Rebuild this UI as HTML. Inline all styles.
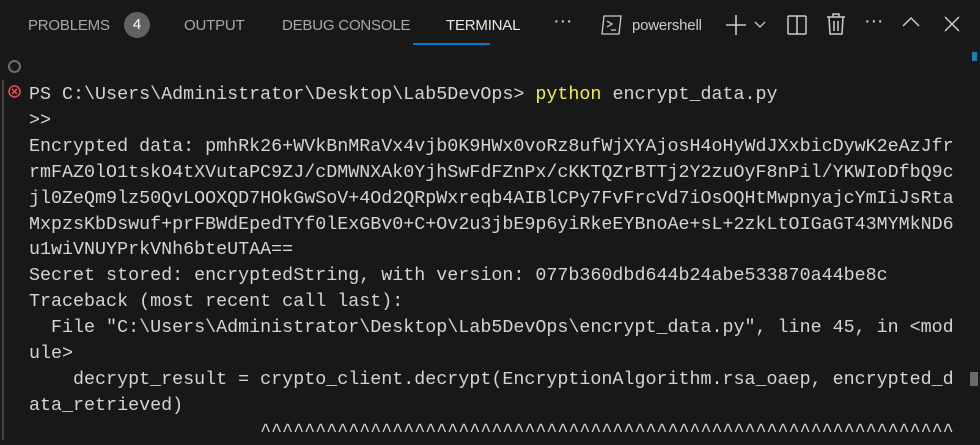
<!DOCTYPE html>
<html><head><style>
body{margin:0;width:980px;height:440px;background:#181818;overflow:hidden;position:relative;font-family:"Liberation Sans",sans-serif}
.tab{position:absolute;top:17px;font-size:15px;color:#a8a8a8;letter-spacing:-0.2px}
.term{position:absolute;left:29px;top:82px;font-family:"Liberation Mono",monospace;font-size:18.35px;line-height:25.9px;color:#d4d4d4;white-space:pre;letter-spacing:0}
.y{color:#f1f14c}
svg{position:absolute}
</style></head><body>
<div class="tab" style="left:28px">PROBLEMS</div>
<div style="position:absolute;left:124px;top:12px;width:26px;height:26px;border-radius:13px;background:#616161;color:#fff;font-size:15px;text-align:center;line-height:26px">4</div>
<div class="tab" style="left:184px">OUTPUT</div>
<div class="tab" style="left:282px">DEBUG CONSOLE</div>
<div class="tab" style="left:446px;color:#e7e7e7">TERMINAL</div>
<div style="position:absolute;left:413px;top:43px;width:77px;height:2px;background:#0078d4"></div>
<div class="tab" style="left:553px;top:10px;font-size:20px;color:#ccc">···</div>
<svg style="left:600px;top:13px" width="24" height="24" viewBox="0 0 24 24" fill="none" stroke="#ccc" stroke-width="1.3"><path d="M4 3h17l-2 18H2z"/><path d="M7 8l5 3-5 3M11 17h5"/></svg>
<div class="tab" style="left:632px;color:#ccc">powershell</div>
<svg style="left:724px;top:13px" width="24" height="24" stroke="#ccc" stroke-width="1.6"><path d="M12 2v20M2 12h20"/></svg>
<svg style="left:754px;top:18px" width="12" height="12" stroke="#ccc" stroke-width="1.3" fill="none"><path d="M1 4l5 5 5-5"/></svg>
<svg style="left:786px;top:14px" width="22" height="22" stroke="#ccc" stroke-width="1.5" fill="none"><rect x="2" y="2" width="18" height="18" rx="1"/><path d="M11 2v18"/></svg>
<svg style="left:826px;top:13px" width="20" height="22" stroke="#ccc" stroke-width="1.5" fill="none"><path d="M1 4h18M7 4V1h6v3M3 4l1 17h12l1-17M8 8v10M12 8v10"/></svg>
<div class="tab" style="left:864px;top:10px;font-size:20px;color:#ccc">···</div>
<svg style="left:902px;top:16px" width="18" height="12" stroke="#ccc" stroke-width="1.5" fill="none"><path d="M1 10l8-8 8 8"/></svg>
<svg style="left:944px;top:16px" width="16" height="16" stroke="#ccc" stroke-width="1.5"><path d="M1 1l14 14M15 1L1 15"/></svg>
<div style="position:absolute;left:8px;top:60px;width:9px;height:9px;border:2px solid #6e6e6e;border-radius:50%"></div>
<div style="position:absolute;left:2px;top:80px;width:2px;height:360px;background:#444"></div>
<svg style="left:8px;top:85px" width="13" height="13"><circle cx="6.5" cy="6.5" r="5.5" fill="none" stroke="#f14c4c" stroke-width="1.5"/><path d="M4 4l5 5M9 4l-5 5" stroke="#f14c4c" stroke-width="1.5"/></svg>
<div style="position:absolute;left:972px;top:52px;width:5px;height:9px;background:#1f7fb0"></div>
<div style="position:absolute;left:970px;top:372px;width:8px;height:14px;background:#6a6a6a"></div>
<div class="term">PS C:\Users\Administrator\Desktop\Lab5DevOps&gt; <span class="y">python</span> encrypt_data.py
&gt;&gt;
Encrypted data: pmhRk26+WVkBnMRaVx4vjb0K9HWx0voRz8ufWjXYAjosH4oHyWdJXxbicDywK2eAzJfr
rmFAZ0lO1tskO4tXVutaPC9ZJ/cDMWNXAk0YjhSwFdFZnPx/cKKTQZrBTTj2Y2zuOyF8nPil/YKWIoDfbQ9c
jl0ZeQm9lz50QvLOOXQD7HOkGwSoV+4Od2QRpWxreqb4AIBlCPy7FvFrcVd7iOsOQHtMwpnyajcYmIiJsRta
MxpzsKbDswuf+prFBWdEpedTYf0lExGBv0+C+Ov2u3jbE9p6yiRkeEYBnoAe+sL+2zkLtOIGaGT43MYMkND6
u1wiVNUYPrkVNh6bteUTAA==
Secret stored: encryptedString, with version: 077b360dbd644b24abe533870a44be8c
Traceback (most recent call last):
  File "C:\Users\Administrator\Desktop\Lab5DevOps\encrypt_data.py", line 45, in &lt;mod
ule&gt;
    decrypt_result = crypto_client.decrypt(EncryptionAlgorithm.rsa_oaep, encrypted_d
ata_retrieved)
                     ^^^^^^^^^^^^^^^^^^^^^^^^^^^^^^^^^^^^^^^^^^^^^^^^^^^^^^^^^^^^^^^</div>
</body></html>
